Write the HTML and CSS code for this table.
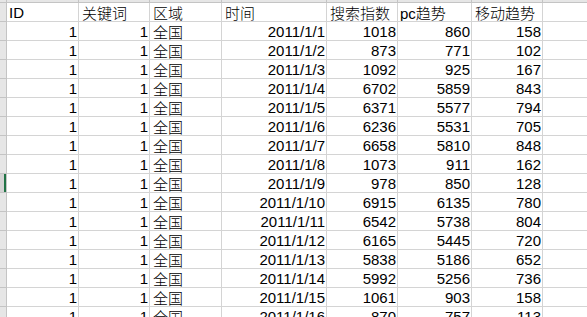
FILE: index.html
```html
<!DOCTYPE html>
<html lang="zh-CN">
<head>
<meta charset="utf-8">
<title>Sheet</title>
<link rel="stylesheet" href="styles.css">
</head>
<body>
<div class="sheet">
  <div class="row"><div class="corner"></div><div class="ch"></div><div class="ch"></div><div class="ch"></div><div class="ch"></div><div class="ch"></div><div class="ch"></div><div class="ch"></div><div class="ch"></div></div>
  <div class="row"><div class="rh"></div><div class="c">ID</div><div class="c zh">关键词</div><div class="c zh">区域</div><div class="c zh">时间</div><div class="c zh">搜索指数</div><div class="c">pc<span class="zh">趋势</span></div><div class="c zh">移动趋势</div><div class="c"></div></div>
  <div class="row"><div class="rh"></div><div class="c n">1</div><div class="c n">1</div><div class="c zh">全国</div><div class="c n">2011/1/1</div><div class="c n">1018</div><div class="c n">860</div><div class="c n">158</div><div class="c"></div></div>
  <div class="row"><div class="rh"></div><div class="c n">1</div><div class="c n">1</div><div class="c zh">全国</div><div class="c n">2011/1/2</div><div class="c n">873</div><div class="c n">771</div><div class="c n">102</div><div class="c"></div></div>
  <div class="row"><div class="rh"></div><div class="c n">1</div><div class="c n">1</div><div class="c zh">全国</div><div class="c n">2011/1/3</div><div class="c n">1092</div><div class="c n">925</div><div class="c n">167</div><div class="c"></div></div>
  <div class="row"><div class="rh"></div><div class="c n">1</div><div class="c n">1</div><div class="c zh">全国</div><div class="c n">2011/1/4</div><div class="c n">6702</div><div class="c n">5859</div><div class="c n">843</div><div class="c"></div></div>
  <div class="row"><div class="rh"></div><div class="c n">1</div><div class="c n">1</div><div class="c zh">全国</div><div class="c n">2011/1/5</div><div class="c n">6371</div><div class="c n">5577</div><div class="c n">794</div><div class="c"></div></div>
  <div class="row"><div class="rh"></div><div class="c n">1</div><div class="c n">1</div><div class="c zh">全国</div><div class="c n">2011/1/6</div><div class="c n">6236</div><div class="c n">5531</div><div class="c n">705</div><div class="c"></div></div>
  <div class="row"><div class="rh"></div><div class="c n">1</div><div class="c n">1</div><div class="c zh">全国</div><div class="c n">2011/1/7</div><div class="c n">6658</div><div class="c n">5810</div><div class="c n">848</div><div class="c"></div></div>
  <div class="row"><div class="rh"></div><div class="c n">1</div><div class="c n">1</div><div class="c zh">全国</div><div class="c n">2011/1/8</div><div class="c n">1073</div><div class="c n">911</div><div class="c n">162</div><div class="c"></div></div>
  <div class="row"><div class="rh sel"></div><div class="c n">1</div><div class="c n">1</div><div class="c zh">全国</div><div class="c n">2011/1/9</div><div class="c n">978</div><div class="c n">850</div><div class="c n">128</div><div class="c"></div></div>
  <div class="row"><div class="rh"></div><div class="c n">1</div><div class="c n">1</div><div class="c zh">全国</div><div class="c n">2011/1/10</div><div class="c n">6915</div><div class="c n">6135</div><div class="c n">780</div><div class="c"></div></div>
  <div class="row"><div class="rh"></div><div class="c n">1</div><div class="c n">1</div><div class="c zh">全国</div><div class="c n">2011/1/11</div><div class="c n">6542</div><div class="c n">5738</div><div class="c n">804</div><div class="c"></div></div>
  <div class="row"><div class="rh"></div><div class="c n">1</div><div class="c n">1</div><div class="c zh">全国</div><div class="c n">2011/1/12</div><div class="c n">6165</div><div class="c n">5445</div><div class="c n">720</div><div class="c"></div></div>
  <div class="row"><div class="rh"></div><div class="c n">1</div><div class="c n">1</div><div class="c zh">全国</div><div class="c n">2011/1/13</div><div class="c n">5838</div><div class="c n">5186</div><div class="c n">652</div><div class="c"></div></div>
  <div class="row"><div class="rh"></div><div class="c n">1</div><div class="c n">1</div><div class="c zh">全国</div><div class="c n">2011/1/14</div><div class="c n">5992</div><div class="c n">5256</div><div class="c n">736</div><div class="c"></div></div>
  <div class="row"><div class="rh"></div><div class="c n">1</div><div class="c n">1</div><div class="c zh">全国</div><div class="c n">2011/1/15</div><div class="c n">1061</div><div class="c n">903</div><div class="c n">158</div><div class="c"></div></div>
  <div class="row"><div class="rh"></div><div class="c n">1</div><div class="c n">1</div><div class="c zh">全国</div><div class="c n">2011/1/16</div><div class="c n">870</div><div class="c n">757</div><div class="c n">113</div><div class="c"></div></div>
</div>
</body>
</html>
```
FILE: styles.css
```css
html, body {
  margin: 0;
  padding: 0;
  background: #ffffff;
  overflow: hidden;
}

.sheet {
  display: grid;
  grid-template-columns: 7px 72px 71px 72px 105px 71px 74px 71px 72px;
  grid-template-rows: 3px;
  grid-auto-rows: 19px;
  font-family: "Liberation Sans", "Noto Sans CJK SC", sans-serif;
  font-size: 15px;
  color: #000000;
}

.row {
  display: contents;
}

.corner,
.ch,
.rh {
  box-sizing: border-box;
  background: #e6e6e6;
  border-right: 1px solid #c4c4c4;
  border-bottom: 1px solid #c4c4c4;
}

.rh.sel {
  background: #d3d3d3;
  box-shadow: inset -2px 0 0 #217346;
}

.c {
  box-sizing: border-box;
  border-right: 1px solid #d4d4d4;
  border-bottom: 1px solid #d4d4d4;
  padding: 1px 1px 0 2px;
  line-height: 18px;
  white-space: nowrap;
  overflow: hidden;
}

.zh {
  font-family: "Noto Sans CJK SC", "Liberation Sans", sans-serif;
  font-weight: 300;
  letter-spacing: 0;
}

.c.zh {
  padding-left: 3px;
}

.n {
  text-align: right;
}
```
